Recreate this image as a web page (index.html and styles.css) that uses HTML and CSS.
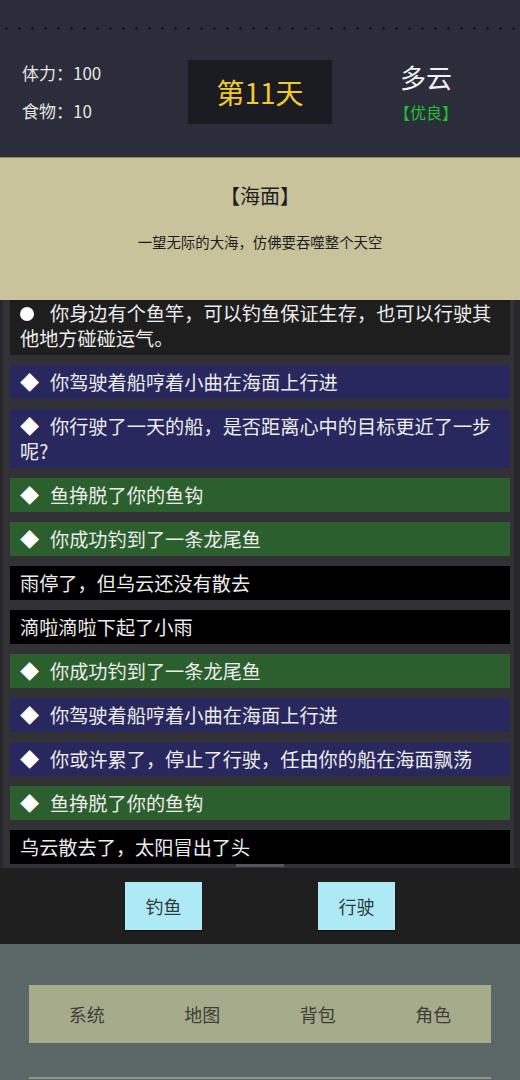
FILE: index.html
```html
<!DOCTYPE html>
<html lang="zh">

<head>
    <meta charset="UTF-8">
    <meta name="viewport" content="width=device-width, initial-scale=1.0">
    <title>海上求生</title>
    <link rel="stylesheet" href="styles.css">
</head>

<body>
    <div class="header">
        <div class="dots"></div>
        <div class="statusRow">
            <div class="stats">
                <p>体力：100</p>
                <p>食物：10</p>
            </div>
            <div class="day">第11天</div>
            <div class="weather">
                <p class="weatherName">多云</p>
                <p class="weatherLevel">【优良】</p>
            </div>
        </div>
    </div>

    <div class="location">
        <h1>【海面】</h1>
        <p>一望无际的大海，仿佛要吞噬整个天空</p>
    </div>

    <div class="log">
        <div class="logList">
            <div class="logItem info"><span class="mark circle"></span>你身边有个鱼竿，可以钓鱼保证生存，也可以行驶其他地方碰碰运气。</div>
            <div class="logItem sail"><span class="mark">◆</span>你驾驶着船哼着小曲在海面上行进</div>
            <div class="logItem sail"><span class="mark">◆</span>你行驶了一天的船，是否距离心中的目标更近了一步呢?</div>
            <div class="logItem fish"><span class="mark">◆</span>鱼挣脱了你的鱼钩</div>
            <div class="logItem fish"><span class="mark">◆</span>你成功钓到了一条龙尾鱼</div>
            <div class="logItem weatherLog">雨停了，但乌云还没有散去</div>
            <div class="logItem weatherLog">滴啦滴啦下起了小雨</div>
            <div class="logItem fish"><span class="mark">◆</span>你成功钓到了一条龙尾鱼</div>
            <div class="logItem sail"><span class="mark">◆</span>你驾驶着船哼着小曲在海面上行进</div>
            <div class="logItem sail"><span class="mark">◆</span>你或许累了，停止了行驶，任由你的船在海面飘荡</div>
            <div class="logItem fish"><span class="mark">◆</span>鱼挣脱了你的鱼钩</div>
            <div class="logItem weatherLog">乌云散去了，太阳冒出了头</div>
        </div>
        <div class="scrollThumb"></div>
    </div>

    <div class="actions">
        <button id="fishBtn">钓鱼</button>
        <button id="sailBtn">行驶</button>
    </div>

    <div class="bottom">
        <div class="nav">
            <button>系统</button>
            <button>地图</button>
            <button>背包</button>
            <button>角色</button>
        </div>
        <div class="navNext"></div>
    </div>
</body>

</html>
```

FILE: styles.css
```css
* {
    box-sizing: border-box;
    margin: 0;
    padding: 0;
}

body {
    height: 1080px;
    overflow: hidden;
    font-family: "Noto Sans CJK SC", "Noto Sans", sans-serif;
    background-color: #5c6867;
}

/* header */
.header {
    background-color: #2b2d3a;
    padding-top: 27px;
    padding-bottom: 35px;
    border-bottom: 1px solid #8d8a70;
}

.dots {
    height: 3px;
    background-image: radial-gradient(circle, #14151b 1px, transparent 1.6px);
    background-size: 13px 3px;
}

.statusRow {
    margin-top: 30px;
    display: grid;
    grid-template-columns: 1fr 144px 1fr;
    height: 62px;
}

.stats {
    padding-left: 22px;
    display: flex;
    flex-direction: column;
    justify-content: center;
    gap: 14px;
    color: #e4e4e4;
    font-size: 17px;
}

.stats p {
    line-height: 24px;
}

.day {
    background-color: #1b1c22;
    color: #f3cb28;
    font-size: 28px;
    display: flex;
    align-items: center;
    justify-content: center;
}

.weather {
    text-align: center;
}

.weatherName {
    color: #f0f0f0;
    font-size: 26px;
    line-height: 34px;
}

.weatherLevel {
    margin-top: 6px;
    color: #1fc02f;
    font-size: 16px;
    line-height: 24px;
}

/* location */
.location {
    background-color: #c8c39b;
    text-align: center;
    color: #1e1e1e;
    height: 142px;
    padding-top: 24px;
}

.location h1 {
    font-size: 20px;
    font-weight: normal;
    line-height: 28px;
}

.location p {
    margin-top: 22px;
    font-size: 14.4px;
    line-height: 20px;
}

/* log */
.log {
    height: 568px;
    overflow: hidden;
    background-color: #323236;
    border-left: 3px solid #28282b;
    border-right: 6px solid #28282b;
    padding: 0 4px 0 7px;
    display: flex;
    flex-direction: column;
}

.logList {
    margin-top: -4px;
    display: flex;
    flex-direction: column;
    gap: 10px;
}

.logItem {
    color: #ececec;
    font-size: 19.2px;
    line-height: 25px;
    padding: 4.5px 10px;
}

.mark {
    display: inline-block;
    width: 30px;
    color: #fff;
}

.mark.circle::before {
    content: "";
    display: inline-block;
    width: 14px;
    height: 14px;
    border-radius: 50%;
    background-color: #fff;
}

.info {
    background-color: #1e1e1e;
}

.sail {
    background-color: #28285f;
}

.fish {
    background-color: #2b5f2e;
}

.weatherLog {
    background-color: #000;
}

.scrollThumb {
    width: 48px;
    height: 3px;
    margin: 0 auto;
    background-color: #55555a;
}

/* action buttons */
.actions {
    background-color: #1f1f1f;
    height: 76px;
    display: flex;
    justify-content: center;
    align-items: center;
    gap: 116px;
}

.actions button {
    width: 77px;
    height: 48px;
    background-color: #aeeaf6;
    color: #2e3b3f;
    border: none;
    box-shadow: 0 1px 1px #0e0e0e;
    font-family: inherit;
    font-size: 18px;
}

/* bottom nav */
.bottom {
    padding: 41px 29px 0;
}

.nav {
    height: 58px;
    background-color: #a6ab8c;
    display: grid;
    grid-template-columns: repeat(4, 1fr);
}

.nav button {
    background: none;
    border: none;
    color: #3d3f37;
    font-family: inherit;
    font-size: 18px;
}

.navNext {
    margin-top: 34px;
    height: 2px;
    background-color: #8e9585;
}
```
